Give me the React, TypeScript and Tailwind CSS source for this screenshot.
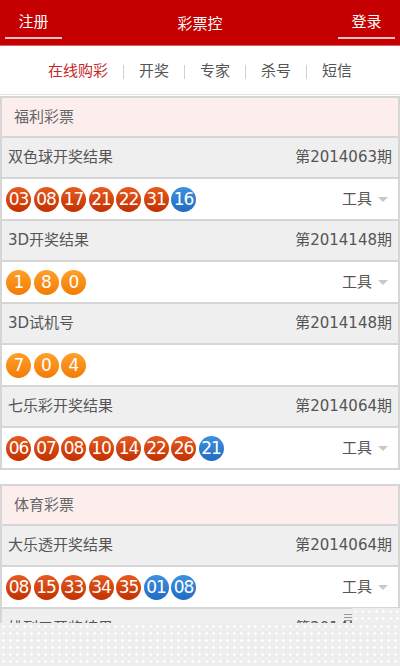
import React from 'react';

type Ball = { n: string; c: 'red' | 'blue' | 'orange' };

interface Draw {
  name: string;
  period: string;
  balls: Ball[];
  tool: boolean;
}

const r = (n: string): Ball => ({ n, c: 'red' });
const b = (n: string): Ball => ({ n, c: 'blue' });
const o = (n: string): Ball => ({ n, c: 'orange' });

const welfare: Draw[] = [
  { name: '双色球开奖结果', period: '第2014063期', balls: ['03', '08', '17', '21', '22', '31'].map(r).concat([b('16')]), tool: true },
  { name: '3D开奖结果', period: '第2014148期', balls: ['1', '8', '0'].map(o), tool: true },
  { name: '3D试机号', period: '第2014148期', balls: ['7', '0', '4'].map(o), tool: false },
  { name: '七乐彩开奖结果', period: '第2014064期', balls: ['06', '07', '08', '10', '14', '22', '26'].map(r).concat([b('21')]), tool: true },
];

const sports: Draw[] = [
  { name: '大乐透开奖结果', period: '第2014064期', balls: ['08', '15', '33', '34', '35'].map(r).concat(['01', '08'].map(b)), tool: true },
  { name: '排列三开奖结果', period: '第2014148期', balls: [], tool: false },
];

const ballClass = {
  red: 'bg-gradient-to-b from-[#e65a1e] to-[#c23000]',
  blue: 'bg-gradient-to-b from-[#3f90e0] to-[#1f6cc2]',
  orange: 'bg-gradient-to-b from-[#ffa028] to-[#f27c00]',
};

const DrawRows: React.FC<{ draw: Draw }> = ({ draw }) => (
  <>
    <div className="h-[41px] flex items-center justify-between px-[6px] bg-[#efefef] border-b-2 border-[#d6d6d6] text-[15px] text-[#555]">
      <span>{draw.name}</span>
      <span>{draw.period}</span>
    </div>
    {draw.balls.length > 0 && (
      <div className="h-[42px] flex items-center justify-between pl-[4px] pr-[10px] bg-white border-b-2 border-[#d6d6d6]">
        <div className="flex gap-[2.5px]">
          {draw.balls.map((ball, i) => (
            <div
              key={i}
              className={`w-[25px] h-[25px] rounded-full flex items-center justify-center text-white text-[17px] leading-none tracking-[-1px] ${ballClass[ball.c]}`}
            >
              {ball.n}
            </div>
          ))}
        </div>
        {draw.tool && (
          <div className="flex items-center gap-[6px] text-[15px] text-[#555]">
            <span>工具</span>
            <span className="w-0 h-0 border-l-[5px] border-r-[5px] border-t-[5px] border-l-transparent border-r-transparent border-t-[#c8c8c8]" />
          </div>
        )}
      </div>
    )}
  </>
);

const Section: React.FC<{ title: string; draws: Draw[] }> = ({ title, draws }) => (
  <div className="border-2 border-b-0 border-[#d6d6d6]">
    <div className="h-[40px] flex items-center px-[12px] bg-[#fdeeee] border-b-2 border-[#d6d6d6] text-[15px] text-[#666]">
      {title}
    </div>
    {draws.map((d) => (
      <DrawRows key={d.name} draw={d} />
    ))}
  </div>
);

const navItems = ['在线购彩', '开奖', '专家', '杀号', '短信'];

export default function App() {
  return (
    <div
      className="relative w-[400px] h-[666px] overflow-hidden bg-white"
      style={{ fontFamily: '"DejaVu Sans", "Noto Sans CJK SC", sans-serif' }}
    >
      <header className="h-[46px] bg-[#c40000] border-b border-[#e06060] flex items-center px-[5px]">
        <div className="w-[57px] h-full flex flex-col items-center justify-end">
          <span className="text-white text-[15px] leading-none mb-[7px]">注册</span>
          <span className="w-full h-[2px] bg-[#f4c2c2] mb-[6px]" />
        </div>
        <div className="flex-1 text-center text-white text-[15px] leading-none pt-[3px]">彩票控</div>
        <div className="w-[57px] h-full flex flex-col items-center justify-end">
          <span className="text-white text-[15px] leading-none mb-[7px]">登录</span>
          <span className="w-full h-[2px] bg-[#f4c2c2] mb-[6px]" />
        </div>
      </header>

      <nav className="h-[49px] pt-[3px] flex items-center justify-center gap-[15px] border-b border-[#e2e2e2] text-[15px]">
        {navItems.map((item, i) => (
          <React.Fragment key={item}>
            {i > 0 && <span className="w-px h-[14px] bg-[#d0d0d0]" />}
            <span className={i === 0 ? 'text-[#c3282b]' : 'text-[#555]'}>{item}</span>
          </React.Fragment>
        ))}
      </nav>

      <div className="pt-[1px]">
        <Section title="福利彩票" draws={welfare} />
        <div className="h-[14px]" />
        <Section title="体育彩票" draws={sports} />
      </div>

      <div className="absolute left-[344px] top-[614px] w-[8px] flex flex-col gap-[2px]">
        <span className="h-px bg-[#999]" />
        <span className="h-px bg-[#999]" />
        <span className="h-px bg-[#999]" />
      </div>
      <div className="absolute left-[352px] top-[608px] right-0 h-[15px] bg-[#eeeeee] bg-[radial-gradient(circle,#ffffff_1px,transparent_1.5px)] bg-[length:7px_7px]" />
      <div className="absolute left-0 right-0 top-[623px] bottom-0 bg-[#eeeeee] bg-[radial-gradient(circle,#ffffff_1px,transparent_1.5px)] bg-[length:7px_7px]" />
    </div>
  );
}
